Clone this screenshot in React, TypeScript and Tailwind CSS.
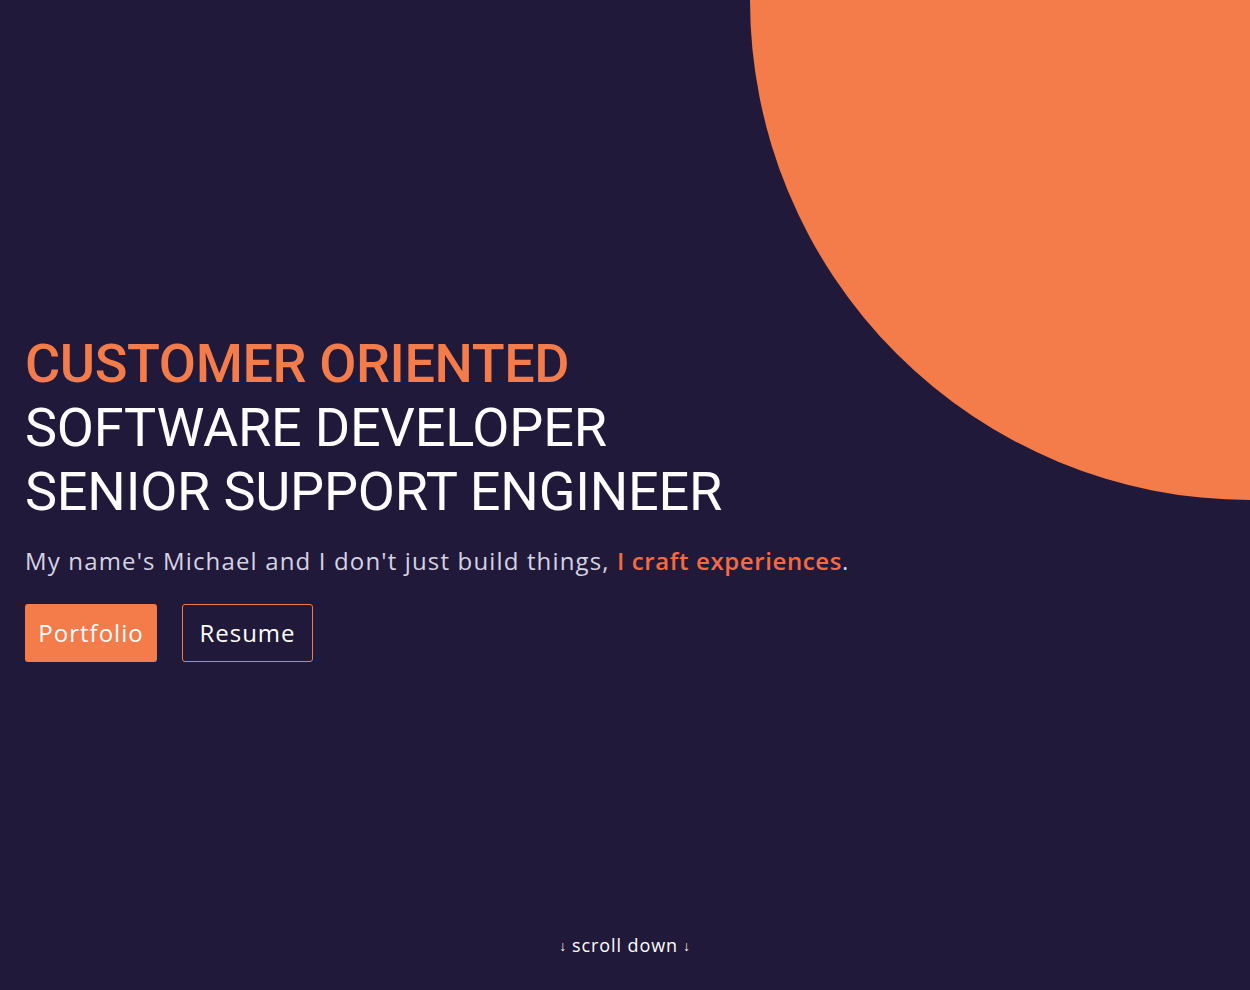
import React from "react";

export default function App() {
  return (
    <div className="relative h-[990px] w-full overflow-hidden bg-[#21193a]">
      <div className="absolute right-[-500px] top-[-500px] h-[1000px] w-[1000px] rounded-full bg-[#f37c4a]" />
      <div className="relative flex h-full flex-col">
        <main className="flex flex-1 flex-col pl-[25px] pt-[332px]">
          <h1 className="font-['Roboto',sans-serif] text-[54px] leading-[64px] tracking-[-0.2px]">
            <span className="block font-medium tracking-[-0.4px] text-[#f37c4a]">CUSTOMER ORIENTED</span>
            <span className="block font-normal text-white">SOFTWARE DEVELOPER</span>
            <span className="block font-normal text-white">SENIOR SUPPORT ENGINEER</span>
          </h1>
          <p className="mt-[21px] font-['Open_Sans',sans-serif] text-[24px] font-normal leading-[32px] tracking-[1.15px] text-[#d6d3e2]">
            My name's Michael and I don't just build things,{" "}
            <span className="font-semibold tracking-[0.6px] text-[#f8693f]">I craft experiences</span>.
          </p>
          <div className="mt-[27px] flex gap-[25px]">
            <button className="h-[58px] w-[132px] rounded-[3px] bg-[#f37c4a] font-['Open_Sans',sans-serif] text-[24px] font-normal tracking-[1px] text-white">
              Portfolio
            </button>
            <button className="h-[58px] w-[131px] rounded-[3px] border border-[#f37c4a] font-['Open_Sans',sans-serif] text-[24px] font-normal tracking-[1px] text-white">
              Resume
            </button>
          </div>
        </main>
        <footer className="flex justify-center pb-[31px] font-['Open_Sans',sans-serif] text-[18px] tracking-[0.9px] text-white">
          <span className="flex items-center gap-[5px]">
            <span className="text-[14px] text-[#fff3dc]">↓</span>
            scroll down
            <span className="text-[14px] text-[#fff3dc]">↓</span>
          </span>
        </footer>
      </div>
    </div>
  );
}
